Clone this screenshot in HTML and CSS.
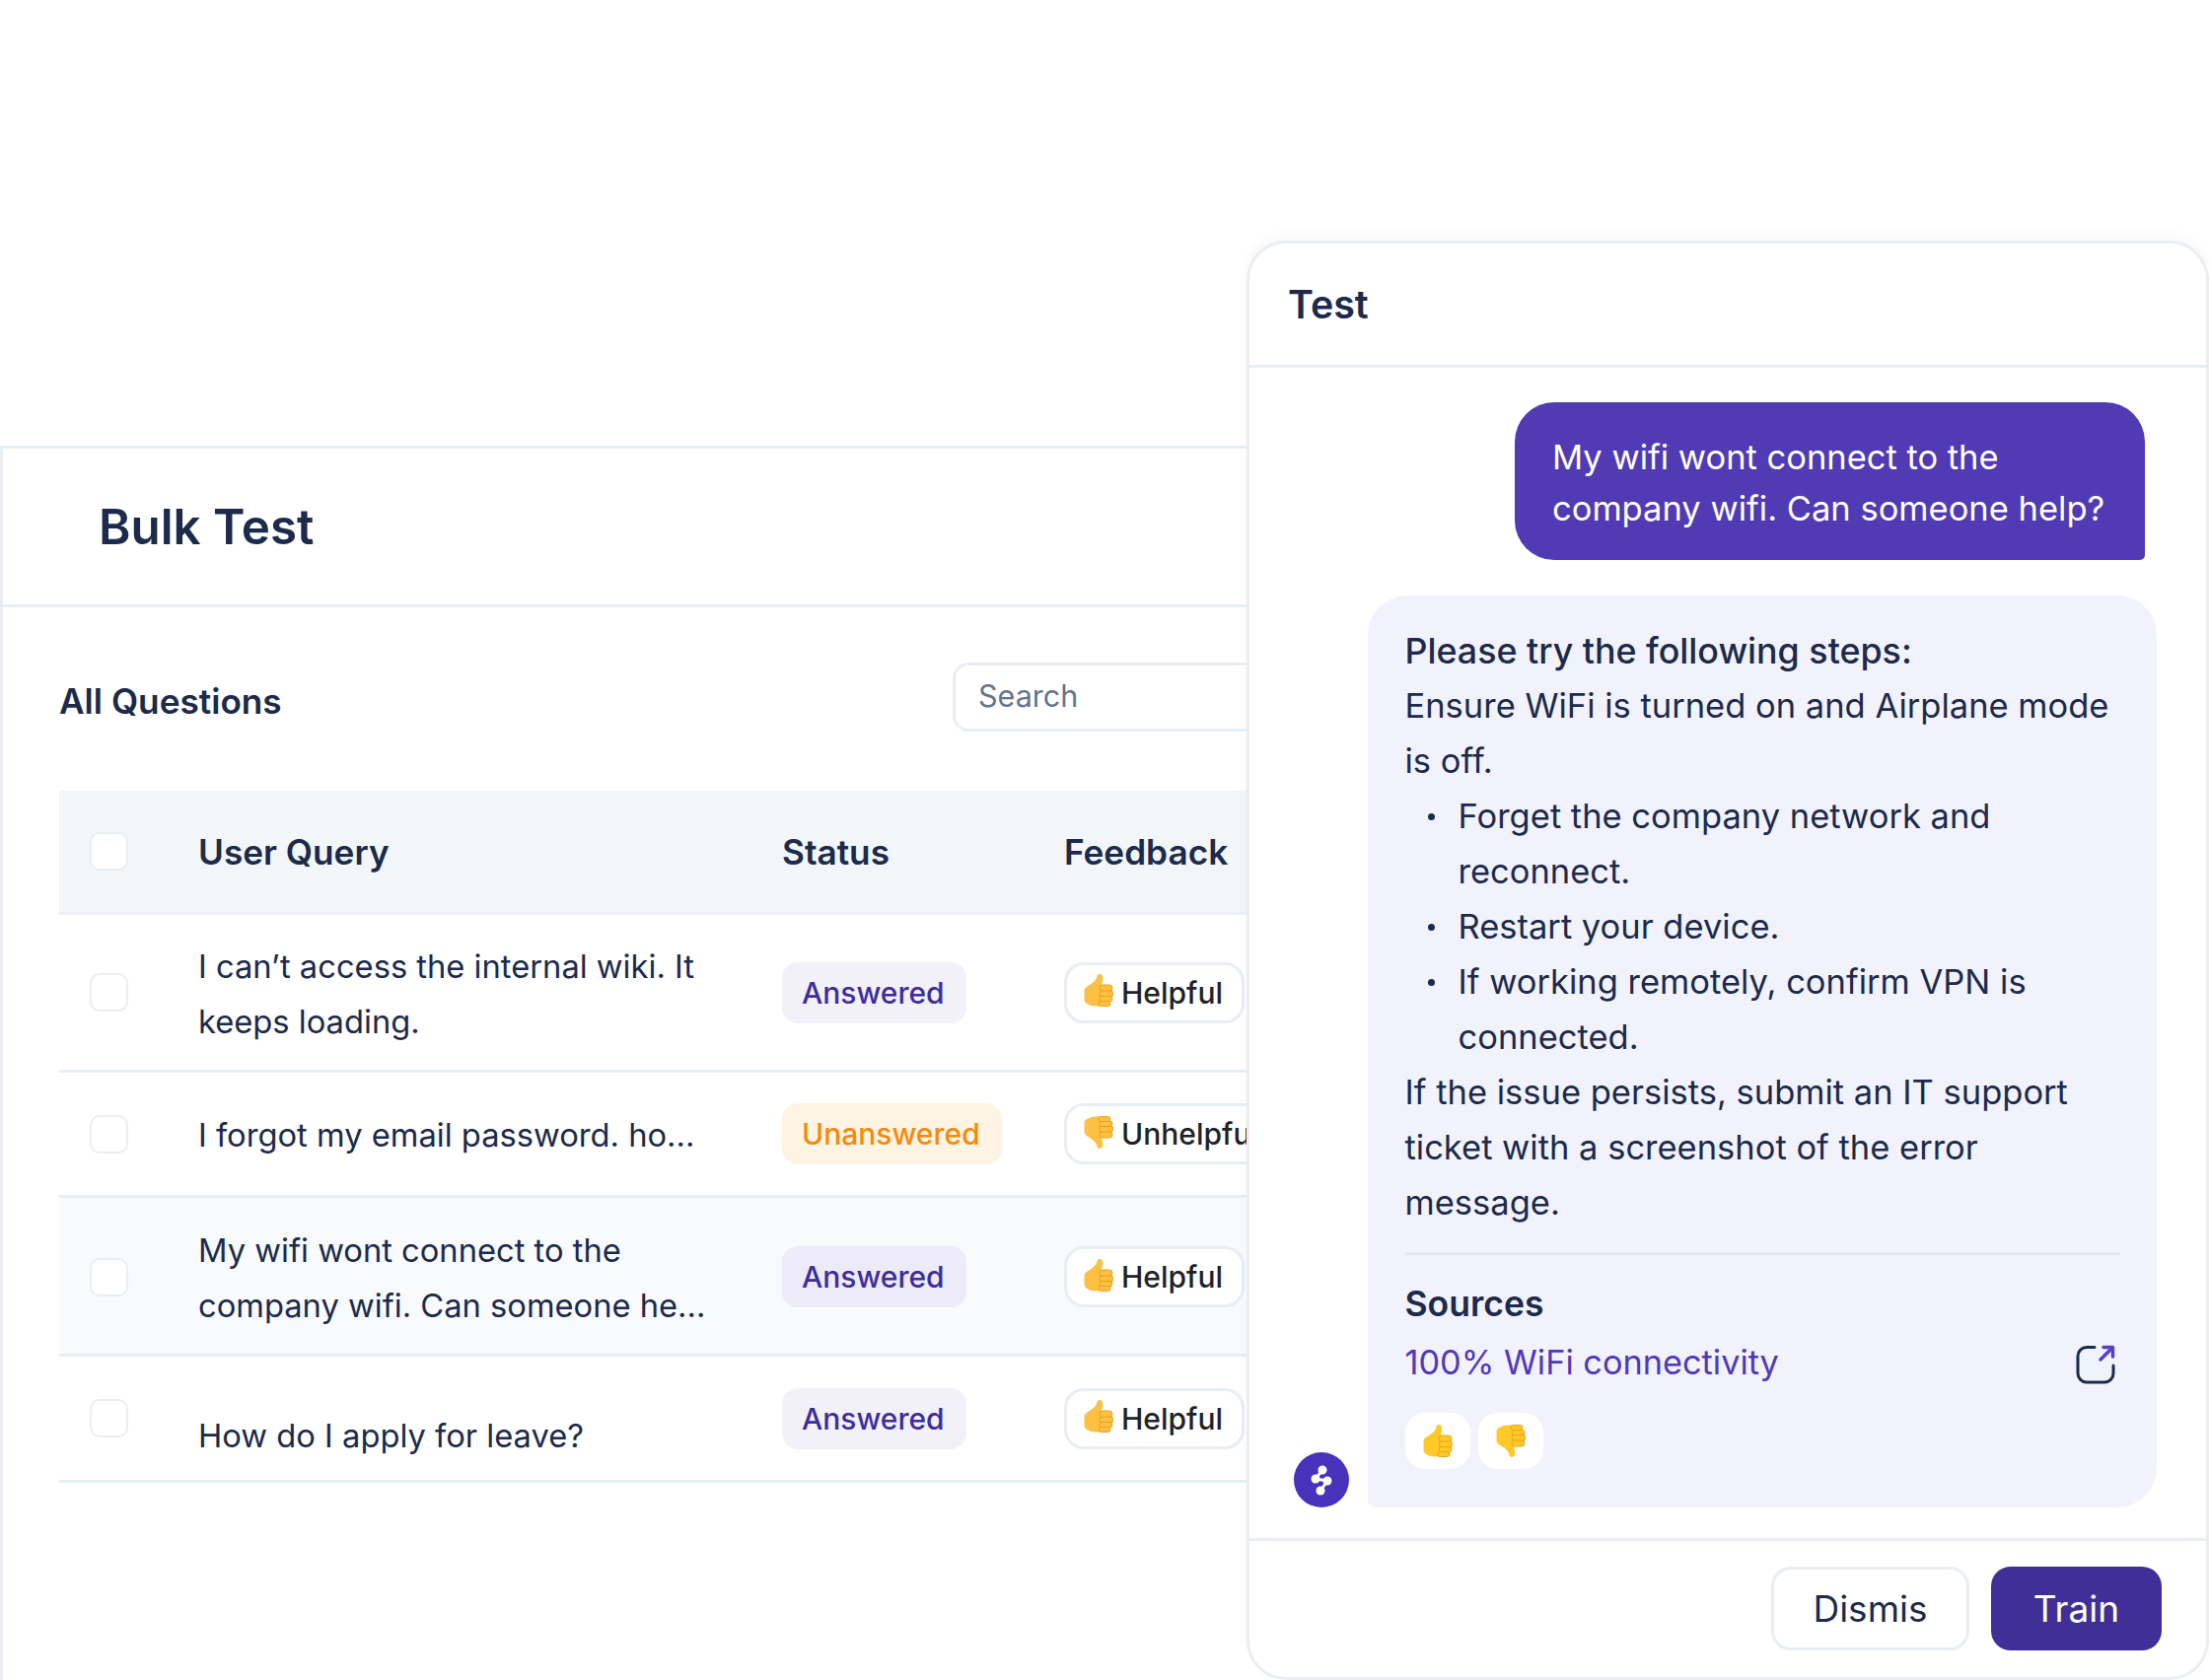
FILE: index.html
```html
<!DOCTYPE html>
<html>

<head>
    <meta name="viewport" content="width=device-width, initial-scale=1">
    <link rel="stylesheet" href="styles.css">
</head>

<body>

<svg class="defs" width="0" height="0">
    <symbol id="thumb" viewBox="0 0 30 33">
        <path class="hand" d="M0.500 17c0-2 1-3 3-4.500 3-2 7-4 9-7.500 1-2 1-5 3.500-5 3 0 3.500 3 3 6l-1 6v20.500H11c-3 0-5-1-6.500-2-3-1-4-2.500-4-5z"/>
        <g class="fold">
            <rect x="16" y="11" width="13" height="6.500" rx="3.200"/>
            <rect x="16" y="17" width="14" height="6" rx="3"/>
            <rect x="16" y="22.500" width="13" height="5.500" rx="2.700"/>
            <rect x="15" y="27.500" width="12" height="5" rx="2.500"/>
        </g>
    </symbol>
</svg>

<section class="bulk">
    <h1 class="bulk-title">Bulk Test</h1>

    <div class="bulk-body">
        <div class="toolbar">
            <h2 class="toolbar-title">All Questions</h2>
            <div class="search">Search</div>
        </div>

        <div class="row row-head">
            <span class="check"></span>
            <span>User Query</span>
            <span>Status</span>
            <span>Feedback</span>
        </div>

        <div class="row row-first">
            <span class="check"></span>
            <p class="query">I can’t access the internal wiki. It keeps loading.</p>
            <div><span class="pill answered">Answered</span></div>
            <div><span class="vote"><svg class="thumb"><use href="#thumb"/></svg>Helpful</span></div>
        </div>

        <div class="row row-second">
            <span class="check"></span>
            <p class="query">I forgot my email password. ho...</p>
            <div><span class="pill unanswered">Unanswered</span></div>
            <div><span class="vote"><svg class="thumb down"><use href="#thumb"/></svg>Unhelpful</span></div>
        </div>

        <div class="row row-third">
            <span class="check"></span>
            <p class="query">My wifi wont connect to the company wifi. Can someone he...</p>
            <div><span class="pill answered dark">Answered</span></div>
            <div><span class="vote"><svg class="thumb"><use href="#thumb"/></svg>Helpful</span></div>
        </div>

        <div class="row row-fourth">
            <span class="check"></span>
            <p class="query low">How do I apply for leave?</p>
            <div><span class="pill answered">Answered</span></div>
            <div><span class="vote"><svg class="thumb"><use href="#thumb"/></svg>Helpful</span></div>
        </div>
    </div>
</section>

<section class="chat">
    <h2 class="chat-title">Test</h2>

    <div class="chat-body">
        <div class="bubble-user">My wifi wont connect to the company wifi. Can someone help?</div>

        <div class="bot-row">
            <span class="avatar">
                <svg width="56" height="56" viewBox="0 0 56 56">
                    <path d="M29 18L22 27L34 29L27 39" fill="none" stroke="#fff" stroke-width="3"/>
                    <circle cx="29" cy="18" r="4.500" fill="#fff"/>
                    <circle cx="22" cy="27" r="4.500" fill="#fff"/>
                    <circle cx="34" cy="29" r="4.500" fill="#fff"/>
                    <circle cx="27" cy="39" r="4.500" fill="#fff"/>
                </svg>
            </span>

            <div class="bubble-bot">
                <p class="lead">Please try the following steps:</p>
                <p>Ensure WiFi is turned on and Airplane mode is off.</p>
                <ul class="steps">
                    <li>Forget the company network and reconnect.</li>
                    <li>Restart your device.</li>
                    <li>If working remotely, confirm VPN is connected.</li>
                </ul>
                <p>If the issue persists, submit an IT support ticket with a screenshot of the error message.</p>

                <h3 class="sources">Sources</h3>
                <div class="source-link">
                    <a href="#">100% WiFi connectivity</a>
                    <svg class="open-icon" width="40" height="40" viewBox="0 0 40 40" fill="none" stroke-width="3" stroke-linecap="round" stroke-linejoin="round">
                        <path d="M19 2.500H11a9 9 0 0 0-9 9V29a9 9 0 0 0 9 9h18a9 9 0 0 0 9-9v-8" stroke="#1c2a4b"/>
                        <path d="M25 15L36 4M28 2.500h9.500V12" stroke="#5a3fc0" stroke-width="3.500"/>
                    </svg>
                </div>

                <div class="rate">
                    <span class="rate-btn"><svg class="thumb flat"><use href="#thumb"/></svg></span>
                    <span class="rate-btn"><svg class="thumb flat down"><use href="#thumb"/></svg></span>
                </div>
            </div>
        </div>
    </div>

    <div class="chat-foot">
        <button class="btn">Dismis</button>
        <button class="btn primary">Train</button>
    </div>
</section>

</body>
</html>
```

FILE: styles.css
```css
* {
    box-sizing: border-box;
}

html, body {
    margin: 0;
    height: 1704px;
    overflow: hidden;
    background: #fff;
}

body {
    position: relative;
    font-family: Inter, "Noto Sans", sans-serif;
    color: #1c2a4b;
    font-size: 32.700px;
    line-height: 56px;
}

p, h1, h2, h3, ul {
    margin: 0;
    padding: 0;
}

.defs {
    position: absolute;
}

/* left panel */
.bulk {
    margin-top: 452px;
    width: 1400px;
    height: 1252px;
    border: 3px solid #e9eef3;
    border-right: 0;
    border-bottom: 0;
}

.bulk-title {
    height: 161px;
    padding-left: 97px;
    border-bottom: 3px solid #e9eef3;
    font-size: 49.300px;
    font-weight: 600;
    line-height: 158px;
}

.bulk-body {
    padding-left: 57px;
}

.toolbar {
    display: flex;
    justify-content: space-between;
    height: 186px;
    padding-top: 56px;
}

.toolbar-title {
    font-size: 35.200px;
    font-weight: 600;
    line-height: 79px;
}

.search {
    width: 400px;
    height: 70px;
    margin-right: 34px;
    padding-left: 23px;
    border: 3px solid #e9eef3;
    border-radius: 16px;
    color: #64748b;
    font-size: 30.500px;
    line-height: 62px;
}

.row {
    display: grid;
    grid-template-columns: 141px 592px 286px 1fr;
    align-items: center;
    border-bottom: 3px solid #e9eef3;
}

.row-head {
    height: 126px;
    background: #f2f6f9;
    font-size: 35.200px;
    font-weight: 600;
    border-bottom-color: #eceff3;
}

.row-first {
    height: 160px;
}

.row-second {
    height: 127px;
}

.row-third {
    height: 161px;
    padding-top: 2px;
    background: #f8fafc;
}

.row-fourth {
    height: 128px;
}

.check {
    width: 39px;
    height: 39px;
    margin-left: 31px;
    background: #fff;
    border: 2px solid #e9eef3;
    border-radius: 10px;
}

.query {
    width: 530px;
    padding-top: 2px;
}

.low {
    padding-top: 34px;
}

.pill {
    display: inline-block;
    height: 62px;
    padding: 0 22px 0 20px;
    border-radius: 16px;
    font-size: 30px;
    font-weight: 500;
    line-height: 62px;
    vertical-align: middle;
}

.answered {
    background: #f2f1fa;
    color: #3f2d9a;
}

.answered.dark {
    background: #ecebf7;
}

.unanswered {
    background: #fff4e3;
    color: #f68a0c;
}

.vote {
    display: inline-flex;
    align-items: center;
    gap: 8px;
    height: 62px;
    padding: 0 19px 0 17px;
    background: #fff;
    border: 3px solid #e9eef3;
    border-radius: 20px;
    color: #1f2328;
    font-size: 30px;
    font-weight: 500;
    white-space: nowrap;
    vertical-align: middle;
}

.thumb {
    width: 30px;
    height: 33px;
    margin-top: -4px;
    fill: #fcc143;
}

.fold {
    stroke: #e9a11f;
    stroke-width: 1;
}

.hand {
    stroke: none;
}

.thumb.down {
    transform: rotate(180deg) scaleX(-1);
}

.thumb.flat {
    margin-top: 0;
    fill: #ffca28;
}

/* chat panel, sits over the table */
.chat {
    position: absolute;
    top: 244px;
    left: 1264px;
    width: 976px;
    height: 1460px;
    display: flex;
    flex-direction: column;
    background: #fff;
    border: 3px solid #e9eef3;
    border-radius: 40px;
    box-shadow: 0 -6px 14px rgba(30, 42, 75, 0.03);
    overflow: hidden;
}

.chat-title {
    flex: none;
    height: 126px;
    padding-left: 39px;
    border-bottom: 3px solid #e9eef3;
    font-size: 39.400px;
    font-weight: 600;
    line-height: 124px;
}

.chat-body {
    flex: 1;
    padding: 35px 50px 0 45px;
}

.bubble-user {
    width: 639px;
    height: 160px;
    margin: 0 12px 36px auto;
    padding: 30px 20px 0 38px;
    background: #503bb4;
    border-radius: 40px 40px 5px 40px;
    color: #fff;
    font-size: 34.500px;
    line-height: 52px;
}

.bot-row {
    display: flex;
    align-items: flex-end;
    gap: 19px;
}

.avatar {
    flex: none;
    width: 56px;
    height: 56px;
    background: #4832bb;
    border-radius: 50%;
}

.avatar svg {
    display: block;
}

.bubble-bot {
    flex: 1;
    padding: 28px 37px 39px 37.500px;
    background: #f2f2fc;
    border-radius: 40px 40px 40px 8px;
    font-size: 34.500px;
}

.lead {
    font-size: 35.800px;
    font-weight: 500;
}

.steps {
    padding-left: 54px;
    list-style: none;
}

.steps li {
    position: relative;
}

.steps li::before {
    content: "";
    position: absolute;
    top: 25px;
    left: -31px;
    width: 7px;
    height: 7px;
    background: #1c2a4b;
    border-radius: 50%;
}

.sources {
    margin-top: 22px;
    padding-top: 22px;
    border-top: 3px solid #e6e7f3;
    font-size: 35.500px;
    font-weight: 600;
    line-height: 56px;
}

.source-link {
    display: flex;
    justify-content: space-between;
    align-items: center;
    margin-top: 3px;
    padding-right: 5px;
    font-size: 34.300px;
}

.open-icon {
    position: relative;
    top: 2px;
}

.source-link a {
    color: #5039b8;
    text-decoration: none;
}

.rate {
    display: flex;
    gap: 8px;
    margin-top: 23px;
}

.rate-btn {
    display: flex;
    justify-content: center;
    align-items: center;
    width: 66px;
    height: 57px;
    background: #fff;
    border-radius: 20px;
}

.chat-foot {
    flex: none;
    display: flex;
    justify-content: flex-end;
    gap: 22px;
    height: 141px;
    padding: 26px 45px 0 0;
    border-top: 3px solid #e9eef3;
}

.btn {
    width: 201px;
    height: 85px;
    background: #fff;
    border: 3px solid #e9eef3;
    border-radius: 20px;
    color: #1c2a4b;
    font: 400 37px Inter, sans-serif;
}

.btn.primary {
    width: 173px;
    background: #402f96;
    border: 0;
    color: #fff;
}
```
